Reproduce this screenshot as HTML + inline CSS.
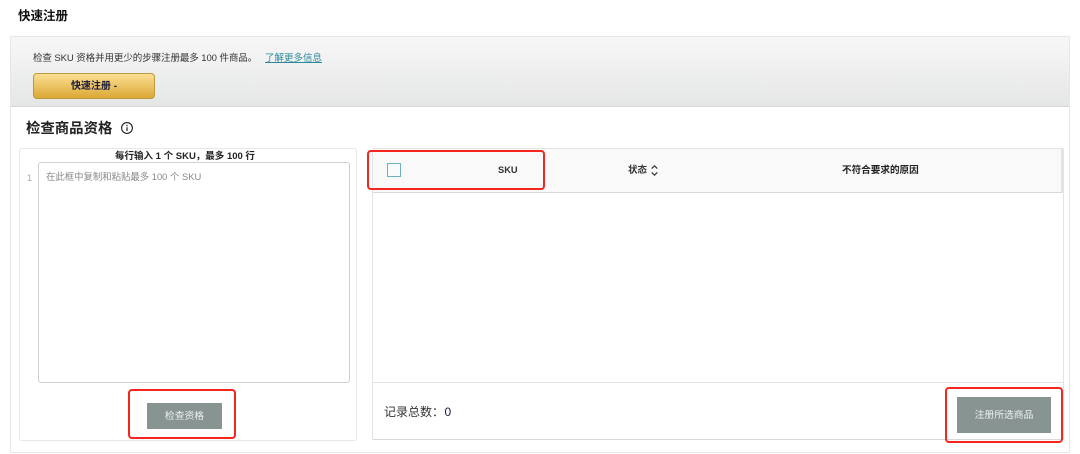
<!DOCTYPE html>
<html lang="zh">
<head>
<meta charset="utf-8">
<style>
html,body{margin:0;padding:0;background:#fff;}
body{width:1080px;height:454px;position:relative;overflow:hidden;font-family:"Liberation Sans","Noto Sans CJK SC",sans-serif;color:#111;}
#w{position:absolute;left:0;top:0;width:1080px;height:454px;filter:blur(.3px);}
.a{position:absolute;box-sizing:border-box;white-space:nowrap;}
.red{border:2px solid #f5261d;border-radius:4px;}
.btn{background:#879492;color:#eef1f0;font-size:9.8px;text-align:center;}
</style>
</head>
<body>
<div id="w">
<div class="a" style="left:18px;top:8px;font-size:12.5px;font-weight:700;line-height:16px;">快速注册</div>

<div class="a" style="left:10px;top:36px;width:1060px;height:417px;border:1px solid #e7e7e7;background:#fff;"></div>
<div class="a" style="left:11px;top:37px;width:1058px;height:70px;background:linear-gradient(#f7f7f7,#e5e6e6);border-bottom:1px solid #d5d5d5;"></div>

<div class="a" style="left:33px;top:52px;font-size:9.5px;letter-spacing:-.08px;line-height:13px;color:#333;">检查 SKU 资格并用更少的步骤注册最多 100 件商品。</div>
<div class="a" style="left:265px;top:52px;font-size:9.5px;line-height:13px;color:#2a8a9c;text-decoration:underline;">了解更多信息</div>

<div class="a" style="left:33px;top:73px;width:122px;height:26px;border:1px solid #b9993f;border-radius:4px;background:linear-gradient(#fbdf94,#dba934);font-size:10px;font-weight:700;line-height:25px;text-align:center;color:#1a1a3a;">快速注册 -</div>

<div class="a" style="left:26px;top:119px;font-size:14.4px;font-weight:700;line-height:20px;color:#222;">检查商品资格</div>
<svg class="a" style="left:120px;top:121px;" width="14" height="14" viewBox="0 0 14 14"><circle cx="7" cy="7" r="5.4" fill="none" stroke="#222" stroke-width="1.1"/><path d="M7 6.2V10" stroke="#222" stroke-width="1.2" fill="none"/><path d="M7 3.8V5.2" stroke="#222" stroke-width="1.2" fill="none"/></svg>

<!-- left panel -->
<div class="a" style="left:19px;top:148px;width:338px;height:293px;border:1px solid #e8e8e8;border-radius:3px;"></div>
<div class="a" style="left:16px;top:150px;width:338px;text-align:center;font-size:9.5px;font-weight:700;line-height:13px;color:#222;">每行输入 1 个 SKU，最多 100 行</div>
<div class="a" style="left:27px;top:172px;font-size:9px;line-height:13px;color:#a8a8a8;">1</div>
<div class="a" style="left:38px;top:162px;width:312px;height:221px;border:1px solid #cfcfcf;border-radius:3px;background:#fff;"></div>
<div class="a" style="left:46px;top:170px;font-size:9.4px;line-height:13px;color:#888;">在此框中复制和粘贴最多 100 个 SKU</div>
<div class="a btn" style="left:147px;top:403px;width:75px;height:26px;line-height:25px;padding-top:1px;">检查资格</div>
<div class="a red" style="left:128px;top:389px;width:108px;height:50px;"></div>

<!-- right panel -->
<div class="a" style="left:372px;top:148px;width:692px;height:292px;border:1px solid #e3e3e3;border-bottom-color:#d8d8d8;border-radius:2px;"></div>
<div class="a" style="left:373px;top:149px;width:690px;height:44px;background:#f9f9f9;border-bottom:1px solid #d8d8d8;border-right:2px solid #e3e3e3;"></div>
<div class="a" style="left:387px;top:163px;width:14px;height:14px;border:1px solid #6fb1bb;background:#f9fbfb;"></div>
<div class="a" style="left:498px;top:164px;font-size:9.3px;font-weight:700;line-height:13px;color:#333;">SKU</div>
<div class="a" style="left:628px;top:164px;font-size:9.5px;font-weight:700;line-height:13px;color:#333;">状态</div>
<svg class="a" style="left:650px;top:164px;" width="9" height="13" viewBox="0 0 9 13"><path d="M1.7 4.6L4.5 1.8L7.3 4.6M1.7 8.4L4.5 11.2L7.3 8.4" fill="none" stroke="#333" stroke-width="1.2"/></svg>
<div class="a" style="left:842px;top:164px;font-size:9.6px;font-weight:700;line-height:13px;color:#222;">不符合要求的原因</div>
<div class="a" style="left:373px;top:382px;width:690px;height:1px;background:#e3e3e3;"></div>
<div class="a" style="left:384px;top:404px;font-size:12px;line-height:16px;color:#333;">记录总数：</div>
<div class="a" style="left:444.5px;top:404px;font-size:12px;line-height:16px;color:#1a1a3a;">0</div>
<div class="a btn" style="left:957px;top:397px;width:94px;height:36px;line-height:36px;padding-top:1px;">注册所选商品</div>
<div class="a red" style="left:945px;top:387px;width:118px;height:56px;"></div>
<div class="a red" style="left:367px;top:150px;width:178px;height:40px;"></div>
</div>
</body>
</html>
